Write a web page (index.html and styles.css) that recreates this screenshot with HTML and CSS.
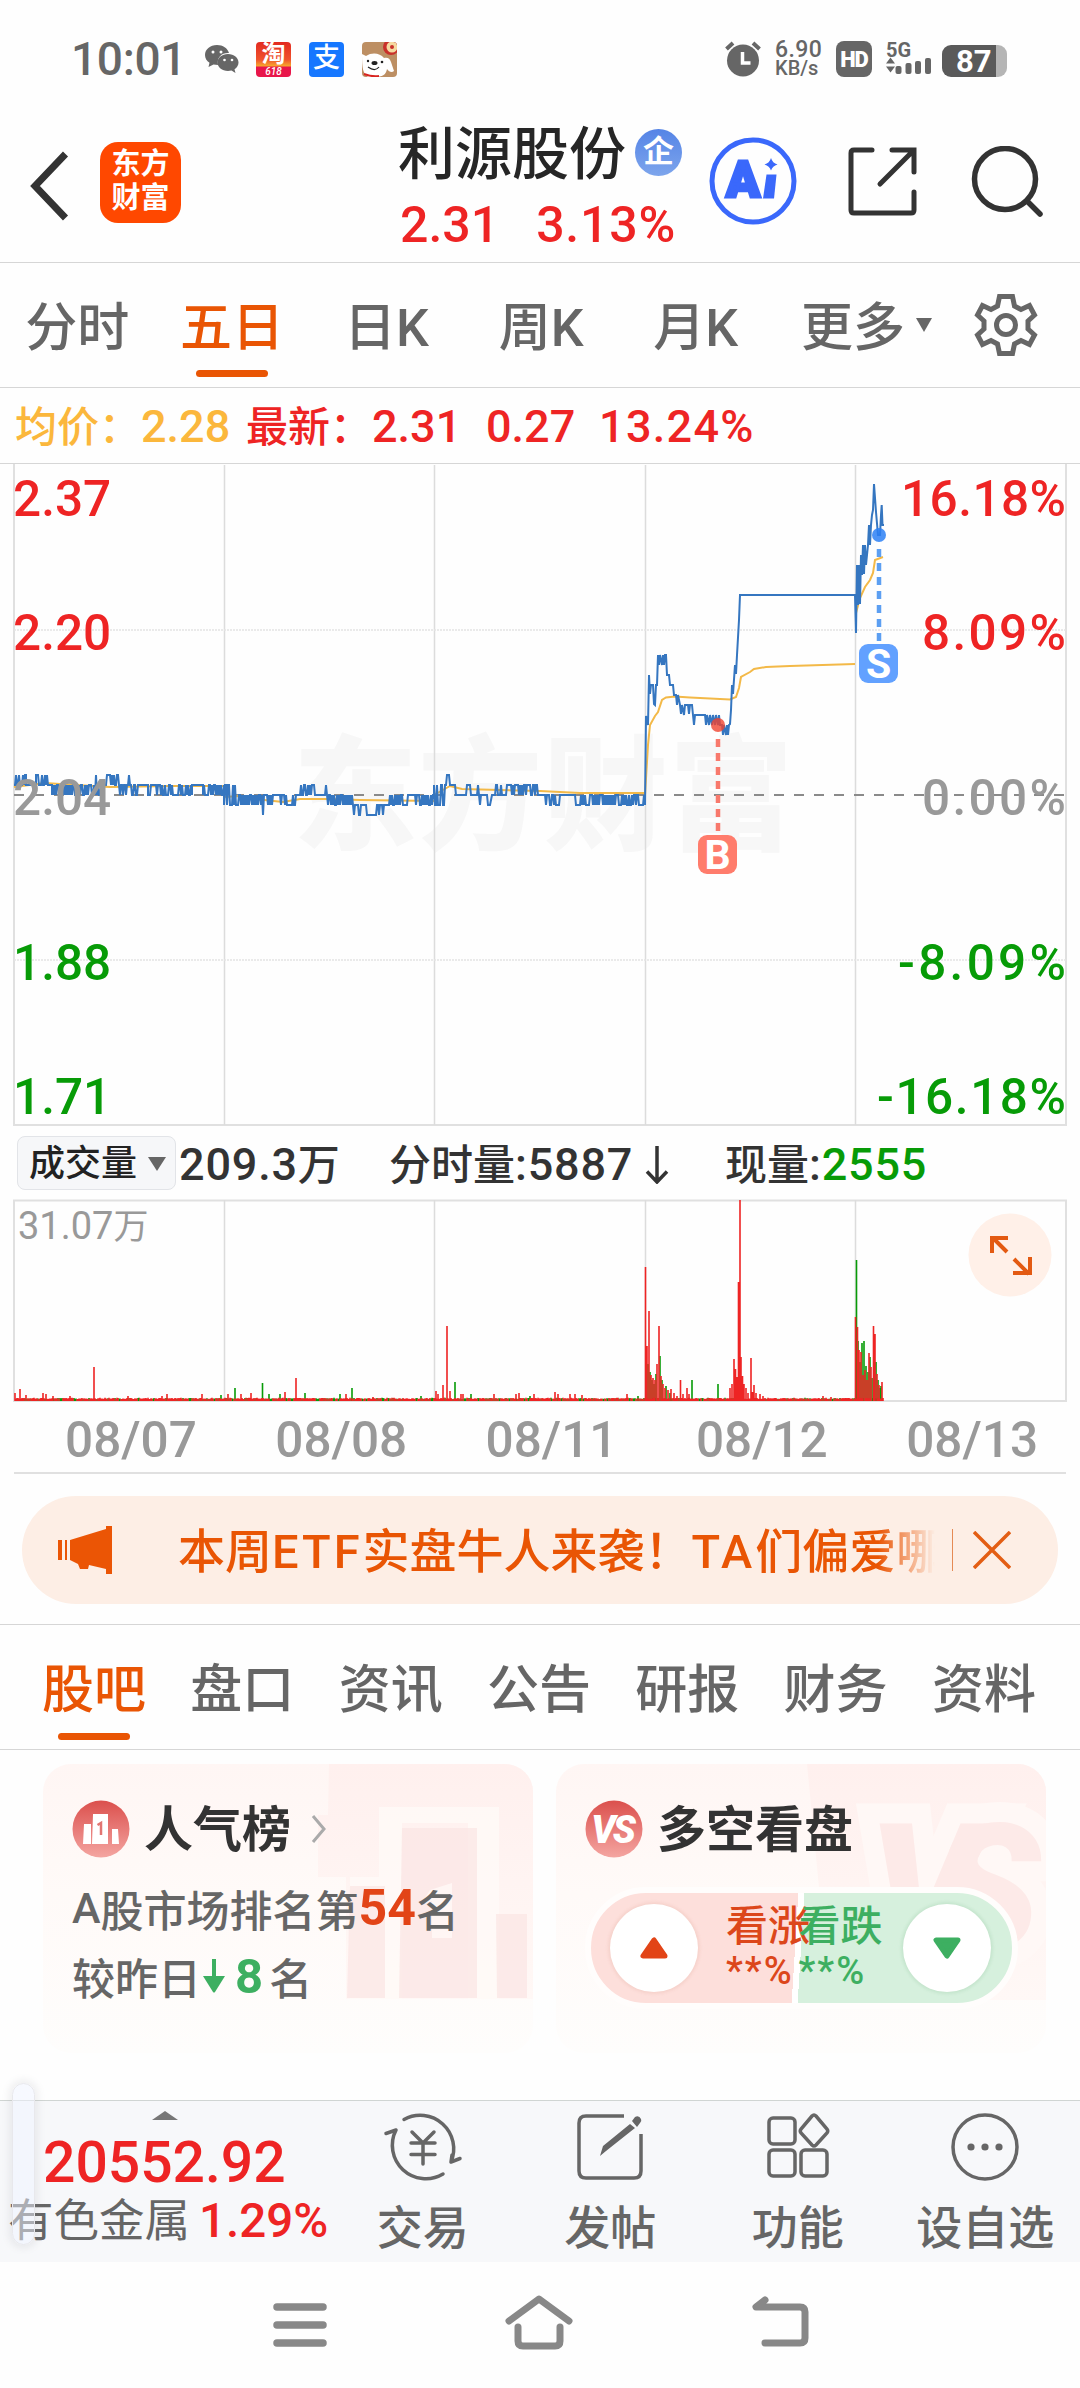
FILE: index.html
```html
<!DOCTYPE html>
<html lang="zh-CN">
<head>
    <meta charset="UTF-8">
    <meta name="viewport" content="width=device-width, initial-scale=1.0">
    <title>利源股份</title>
    <link rel="stylesheet" href="styles.css">
</head>
<body>
    <div class="status-bar">
        <span class="clock">10:01</span>
        <svg class="wechat" width="34" height="30" viewBox="0 0 34 30">
            <path d="M12 1C5 1 0 5.500 0 11c0 3.300 1.700 6 4.500 7.800L3.500 23l5-2.600 4.500.6C11.500 13 17 8.500 24 9 22.500 4 18 1 12 1z" fill="#666"/>
            <path d="M23 10c-6 0-10.500 3.800-10.500 8.500S17 27 23 27l3.500-.5 4 2.500-1-3.800c2.500-1.500 4-4 4-6.700C33.500 13.800 29 10 23 10z" fill="#666"/>
            <g fill="#fff"><circle cx="8" cy="8" r="1.500"/><circle cx="16" cy="8" r="1.500"/><circle cx="19.500" cy="16" r="1.300"/><circle cx="27" cy="16" r="1.300"/></g>
        </svg>
        <span class="app-icon taobao"><b>淘</b><i>618</i></span>
        <span class="app-icon alipay">支</span>
        <svg class="app-icon" width="35" height="35" viewBox="0 0 35 35">
            <rect width="35" height="35" fill="#bd8f63"/>
            <circle cx="29" cy="5" r="8" fill="#c9302a"/><circle cx="30" cy="5" r="5.500" fill="#f5d9a0"/><circle cx="30" cy="5" r="2" fill="#c9302a"/>
            <path d="M0 12l4 2c6-4 14-3 18 2 3-1 6 0 7 4l3 9c-2 2-5 1-7-2-1 6-5 8-12 8H6c-5-3-6-9-6-23z" fill="#fff"/>
            <ellipse cx="12.500" cy="21" rx="3" ry="2" fill="#222"/><circle cx="6" cy="19" r="1.200" fill="#222"/><circle cx="20" cy="20" r="1.300" fill="#222"/>
            <path d="M6 25q7 5 11 0" fill="none" stroke="#222" stroke-width="1.200"/><path d="M2 32q8 3 15 2" stroke="#d8231f" stroke-width="2" fill="none"/>
        </svg>
        <div class="status-right">
            <svg width="36" height="36" viewBox="0 0 36 36">
                <circle cx="18" cy="19.500" r="16" fill="#666"/>
                <path d="M1.500 8L8 2M28 2l6.500 6" stroke="#666" stroke-width="4"/>
                <path d="M17.500 11v11h8" fill="none" stroke="#fff" stroke-width="3.500"/>
            </svg>
            <div class="net-speed"><span>6.90</span><span>KB/s</span></div>
            <span class="hd">HD</span>
            <svg class="signal" width="46" height="36" viewBox="0 0 46 36">
                <text x="0" y="16" class="signal-text">5G</text>
                <path d="M0 22.500l4.500-6 4.500 6zM0 25.500l4.500 6 4.500-6z" fill="#666"/>
                <g fill="#666"><rect x="9.500" y="25" width="6" height="8" rx="2"/><rect x="19.500" y="22" width="6" height="11" rx="2"/><rect x="29" y="20" width="6" height="13" rx="2"/><rect x="39" y="17" width="6" height="16" rx="2"/></g>
            </svg>
            <div class="battery"><span>87</span></div>
        </div>
    </div>

    <div class="header">
        <svg class="back" width="40" height="70" viewBox="0 0 40 70"><path d="M35.500 3L5 35l30.500 32" fill="none" stroke="#333" stroke-width="7"/></svg>
        <div class="logo">东方<br>财富</div>
        <div class="stock">
            <div class="stock-name">利源股份<span class="qi">企</span></div>
            <div class="stock-price"><span>2.31</span><span class="pct">3.13%</span></div>
        </div>
        <svg class="ai" width="88" height="88" viewBox="0 0 88 88">
            <circle cx="44" cy="44" r="41" fill="none" stroke="#3a68fb" stroke-width="5"/>
            <text x="17" y="60" class="ai-text">A</text>
            <path d="M57.500 37.500h10l-2.500 24h-11z" fill="#3a68fb"/>
            <path d="M62 21q1.500 5 6.500 6.500-5 1.500-6.500 6-1.500-4.500-6.500-6 5-1.500 6.500-6.500z" fill="#3a68fb"/>
        </svg>
        <svg class="share" width="70" height="70" viewBox="0 0 70 70" fill="none" stroke="#333" stroke-width="5" stroke-linecap="round">
            <path d="M25 4H7q-3 0-3 3v57q0 3 3 3h57q3 0 3-3V46M45 4h22v22M66 5L33 38"/>
        </svg>
        <svg class="search" width="74" height="74" viewBox="0 0 74 74" fill="none" stroke="#333" stroke-width="5.500" stroke-linecap="round">
            <circle cx="35" cy="33" r="30.500"/><path d="M57 55l13 13"/>
        </svg>
    </div>

    <div class="period-tabs">
        <span>分时</span>
        <span class="active">五日</span>
        <span>日K</span>
        <span>周K</span>
        <span>月K</span>
        <span class="more">更多<i class="caret"></i></span>
        <svg class="gear" width="64" height="64" viewBox="-32 -32 64 64" fill="none" stroke="#666" stroke-width="5">
            <path d="M-6.500-28.500h13l2 9.500 6.500 3.500 8.500-4 5 9.500-6.500 6v8l6.500 6-5 9.500-8.500-4-6.500 3.500-2 9.500h-13l-2-9.500-6.500-3.500-8.500 4-5-9.500 6.500-6v-8l-6.500-6 5-9.500 8.500 4 6.500-3.500z"/>
            <circle r="9.500"/>
        </svg>
    </div>

    <div class="quote-line">
        <span class="avg">均价：<b>2.28</b></span>
        <span>最新：<b>2.31</b></span>
        <b>0.27</b>
        <b class="rise">13.24%</b>
    </div>

    <svg class="price-chart" width="1080" height="662" viewBox="0 464 1080 662">
        <text class="watermark" x="293" y="840" textLength="500">东方财富</text>
        <g class="grid">
            <path class="frame" d="M14 464V1125H1066V464"/>
            <path d="M224.500 465v660M434.500 465v660M645.500 465v660M855.500 465v660"/>
            <path class="dots" d="M14 630h1052M14 960h1052"/>
        </g>
        <path class="zero" d="M14 795h1052"/>
        <g class="axis">
            <text class="up" x="13" y="516">2.37</text>
            <text class="up" x="13" y="650">2.20</text>
            <text class="down" x="13" y="980">1.88</text>
            <text class="down" x="13" y="1114">1.71</text>
            <text class="up" x="901" y="516" textLength="165">16.18%</text>
            <text class="up" x="922" y="650" textLength="144">8.09%</text>
            <text class="down" x="898" y="980" textLength="168">-8.09%</text>
            <text class="down" x="877" y="1114" textLength="189">-16.18%</text>
        </g>
        <g class="avg-line">
            <path d="M14 787L45 783 60 784 110 787 170 786 224 786"/>
            <path d="M224 797L240 796 255 799 283 802 300 799 330 799 360 800 434 801"/>
            <path d="M434 795L450 786 462 789 500 790 540 791 580 793 645 793"/>
            <path d="M645 795L648 745 650 725 655 716 658 712 662 700 666 697.500 675 696.500 690 697.500 730 699.500 736 697 739 688 741 677 750 672 754 669 766 667 790 666 855 664"/>
            <path d="M856 613L860 598 865 587 870 580 873 573 875 560 883 557"/>
        </g>
        <path id="price-line" class="price-line"/>
        <g class="axis">
            <text class="flat" x="13" y="815">2.04</text>
            <text class="flat" x="922" y="815" textLength="144">0.00%</text>
        </g>
        <g class="mark buy">
            <circle cx="718" cy="725" r="7"/>
            <path d="M718 739v94"/>
            <rect x="698" y="835" width="39" height="39" rx="9"/>
            <text x="717.500" y="869">B</text>
        </g>
        <g class="mark sell">
            <circle cx="879" cy="535" r="7"/>
            <path d="M879 549v94"/>
            <rect x="859" y="644" width="39" height="39" rx="9"/>
            <text x="878.500" y="678">S</text>
        </g>
    </svg>

    <div class="volume-line">
        <span class="picker">成交量<i class="caret"></i></span>
        <span class="total"><b>209.3</b>万</span>
        <span class="minute">分时量<b>:5887</b></span>
        <svg class="arrow" width="24" height="38" viewBox="0 0 24 38" fill="none" stroke="#333" stroke-width="3.500"><path d="M12 0v36M2 25.500l10 10.500 10-10.500"/></svg>
        <span class="current">现量<b>:<em>2555</em></b></span>
    </div>

    <svg class="volume-chart" width="1080" height="204" viewBox="0 1199 1080 204">
        <g class="grid">
            <rect class="frame" x="14" y="1200.500" width="1052" height="200.500"/>
            <path d="M224.500 1200v200M434.500 1200v200M645.500 1200v200M855.500 1200v200"/>
        </g>
        <text class="scale" x="18" y="1239">31.07<tspan class="wan">万</tspan></text>
        <path id="vol-down" class="vol-down"/>
        <path id="vol-up" class="vol-up"/>
        <circle cx="1010" cy="1255" r="41.500" fill="#fff0e8"/>
        <path class="expand" d="M1007 1252l-14-14M992 1253v-15h16M1014 1259l15 15M1030 1257v16h-17"/>
    </svg>

    <div class="dates">
        <span>08/07</span><span>08/08</span><span>08/11</span><span>08/12</span><span>08/13</span>
    </div>

    <div class="banner">
        <svg width="54" height="48" viewBox="0 0 54 48" fill="#eb5505">
            <path d="M0 14h4v20H0zM7 14h2v20H7zM12 14L48 3V0h6v48h-6v-5l-17-4-1 4H22l-2-5-8-4z"/>
        </svg>
        <span class="banner-text">本周<b>ETF</b>实盘牛人来袭！<b>TA</b>们偏爱哪</span>
        <i class="divider"></i>
        <svg class="close" width="38" height="38" viewBox="0 0 38 38" stroke="#e35e14" stroke-width="3.500"><path d="M1 1l36 36M37 1L1 37"/></svg>
    </div>

    <div class="info-tabs">
        <span class="active">股吧</span>
        <span>盘口</span>
        <span>资讯</span>
        <span>公告</span>
        <span>研报</span>
        <span>财务</span>
        <span>资料</span>
    </div>

    <div class="cards">
        <div class="card">
            <svg class="card-bg" width="490" height="289" viewBox="43 1764 490 289">
                <path d="M329 1764h204v235H346v-122h-28v-62h10z" fill="url(#fade)"/>
                <path d="M379 1807h120v192h-31v-176h-66v176h-52v-122h29z" fill="#fffaf8" opacity=".8"/>
                <path d="M350 1886h35v112h-38zM402 1828h75v170h-78zM496 1914h31v84h-30z" fill="#fbe6e4" opacity=".75"/>
                <path d="M430 1890l22-7v55h-20v-37l-12 4z" fill="#fff6f4"/>
                <defs><linearGradient id="fade" x1="0" y1="0" x2="0" y2="1"><stop offset="0" stop-color="#fff0ee"/><stop offset="1" stop-color="#fff8f6"/></linearGradient></defs>
            </svg>
            <div class="card-title">
                <svg width="58" height="60" viewBox="0 0 58 60">
                    <defs><linearGradient id="ball" x1="0" y1="0" x2="0" y2="1"><stop offset="0" stop-color="#db504d"/><stop offset="1" stop-color="#f4a5a1"/></linearGradient></defs>
                    <circle cx="29" cy="30" r="28.500" fill="url(#ball)"/>
                    <path d="M12 25h7v20h-8zM21 15h15v30H20zM40 30h6l1 15h-7z" fill="#fff"/>
                    <path d="M25.500 26l3.500-2v12" fill="none" stroke="#e27572" stroke-width="2.500"/>
                </svg>
                <span>人气榜</span>
                <svg class="chev" width="16" height="30" viewBox="0 0 16 30" fill="none" stroke="#aaa" stroke-width="3"><path d="M2 2l11 13L2 28"/></svg>
            </div>
            <div class="rank"><span class="latin">A</span>股市场排名第<b class="hot">54</b>名</div>
            <div class="rank second">较昨日<svg width="24" height="34" viewBox="0 0 24 34" fill="#3daf61"><path d="M10 0h4v17h9L13 33q-1 1-2 0L1 17h9z"/></svg><b class="cool">8</b>名</div>
        </div>
        <div class="card">
            <svg class="card-bg" width="490" height="289" viewBox="556 1764 490 289">
                <path d="M807 1764h239v236H830z" fill="url(#fade)"/>
                <text class="vs-shadow" x="868" y="1950" textLength="172">VS</text>
                <text class="vs-big" x="868" y="1950" textLength="172">VS</text>
            </svg>
            <div class="card-title">
                <svg width="58" height="60" viewBox="0 0 58 60">
                    <circle cx="29" cy="30" r="28.500" fill="url(#ball)"/>
                    <text class="vs" x="27" y="44">VS</text>
                </svg>
                <span>多空看盘</span>
            </div>
            <div class="vote">
                <div class="vote-side bull">
                    <span class="knob"><svg width="28" height="22" viewBox="0 0 28 22"><path d="M14 3L3 19h22z" fill="#e24417" stroke="#e24417" stroke-width="5" stroke-linejoin="round"/></svg></span>
                    <div class="vote-text">看涨<span>**%</span></div>
                </div>
                <div class="vote-side bear">
                    <div class="vote-text">看跌<span>**%</span></div>
                    <span class="knob"><svg width="28" height="22" viewBox="0 0 28 22"><path d="M14 19L3 3h22z" fill="#3daf61" stroke="#3daf61" stroke-width="5" stroke-linejoin="round"/></svg></span>
                </div>
            </div>
        </div>
    </div>

    <div class="bottom-bar">
        <div class="index">
            <i class="caret"></i>
            <div class="index-value">20552.92</div>
            <div class="index-name">有色金属<b>1.29%</b></div>
        </div>
        <div class="action">
            <svg width="80" height="72" viewBox="-40 -36 80 72" fill="none" stroke="#666" stroke-width="3.500" stroke-linecap="round">
                <path d="M-19-27.500A33.500 33.500 0 0 1 28 15M20 27A33.500 33.500 0 0 1-27-17M28 15l9-3.500M28 15l1-7M-27-17l-10 3.500"/>
                <path d="M-11-15L0-4l11-11M0-4v21M-12-4h24M-12 7.500h24"/>
            </svg>
            <span>交易</span>
        </div>
        <div class="action">
            <svg width="80" height="72" viewBox="-40 -36 80 72" fill="none" stroke="#666" stroke-width="3.500">
                <path d="M14-31h-38q-7 0-7 7v48q0 7 7 7h48q7 0 7-7v-37"/>
                <path d="M-10 9l3-10L20-23l5 4L-4 4z" fill="#666" stroke="none"/><path d="M22-26l3-4q4-2 6 2 1 2-1 4l-3 4z" fill="#666" stroke="none"/>
            </svg>
            <span>发帖</span>
        </div>
        <div class="action">
            <svg width="80" height="72" viewBox="-40 -36 80 72" fill="none" stroke="#666" stroke-width="3.500">
                <rect x="-29" y="-29" width="26" height="26" rx="4"/><rect x="-29" y="3" width="26" height="26" rx="4"/><rect x="3" y="3" width="26" height="26" rx="4"/>
                <path d="M14-31q2-2 4 0l11 13q1.500 2 0 4L18-2q-2 2-4 0L3-14q-1.500-2 0-4z"/>
            </svg>
            <span>功能</span>
        </div>
        <div class="action">
            <svg width="80" height="72" viewBox="-40 -36 80 72">
                <circle r="32" fill="none" stroke="#666" stroke-width="3.500"/>
                <g fill="#666"><circle cx="-14" r="3.600"/><circle r="3.600"/><circle cx="14" r="3.600"/></g>
            </svg>
            <span>设自选</span>
        </div>
        <i class="side-handle"></i>
    </div>

    <div class="nav-bar">
        <svg width="60" height="60" viewBox="0 0 60 60" stroke="#888" stroke-width="7.500" stroke-linecap="round"><path d="M7 16h46M7 34h46M7 52h46"/></svg>
        <svg width="72" height="60" viewBox="0 0 72 60" fill="none" stroke="#888" stroke-width="7" stroke-linecap="round" stroke-linejoin="round"><path d="M6 30L36 8l30 22M15 36v14q0 5 5 5h32q5 0 5-5V36"/></svg>
        <svg width="64" height="60" viewBox="0 0 64 60" fill="none" stroke="#888" stroke-width="7" stroke-linecap="round" stroke-linejoin="round"><path d="M17 9l-9 7h44q5 0 5 5v26q0 5-5 5H17"/></svg>
    </div>

    <script src="chart.js"></script>
</body>
</html>
```
FILE: styles.css
```css
* {
    box-sizing: border-box;
}

body {
    margin: 0;
    width: 1080px;
    height: 2388px;
    overflow: hidden;
    background: #fefefe;
    color: #666;
    font-family: Roboto, "Noto Sans CJK SC", sans-serif;
    font-weight: 500;
}

svg {
    display: block;
    flex: none;
}

b, em, i {
    font-weight: 500;
    font-style: normal;
}

.caret {
    display: inline-block;
    border: 8px solid transparent;
    border-top: 14px solid #666;
    border-bottom: 0;
}

/* status bar */
.status-bar {
    display: flex;
    align-items: center;
    height: 104px;
    padding: 14px 73px 0 71px;
}

.clock {
    width: 134px;
    font-size: 46px;
    letter-spacing: -0.3px;
}

.wechat {
    margin-right: 17px;
}

.app-icon {
    width: 35px;
    height: 35px;
    margin-right: 18px;
    border-radius: 4px;
    overflow: hidden;
    color: #fff;
    text-align: center;
}

.taobao {
    background: linear-gradient(#e22a20 0, #f0522c 50%, #f7a52d 68%, #e8164a 72%);
}

.taobao b {
    display: block;
    font-size: 24px;
    font-weight: 700;
    line-height: 24px;
}

.taobao i {
    display: block;
    font-size: 10px;
    font-style: italic;
    line-height: 11px;
}

.alipay {
    background: #1677ff;
    font-size: 27px;
    line-height: 33px;
}

.status-right {
    display: flex;
    align-items: center;
    margin-left: auto;
}

.net-speed {
    display: flex;
    flex-direction: column;
    width: 61px;
    padding-left: 14px;
    font-size: 23px;
    line-height: 19px;
    letter-spacing: 0.4px;
}

.net-speed span + span {
    font-size: 20px;
    letter-spacing: 0;
}

.hd {
    width: 36px;
    height: 36px;
    margin: 0 14px;
    border-radius: 8px;
    background: #666;
    color: #fff;
    font-size: 22px;
    font-weight: 900;
    line-height: 37px;
    text-align: center;
    letter-spacing: -1px;
}

.signal-text {
    font-size: 20px;
    font-weight: 700;
    fill: #666;
}

.battery {
    width: 65px;
    height: 32px;
    margin: 4px 0 0 10px;
    border-radius: 9px;
    background: linear-gradient(90deg, #5a5a5a 54px, #b5b5b5 54px);
    color: #fff;
    font-size: 31px;
    font-weight: 700;
    line-height: 34px;
    padding-left: 14px;
}

.battery span {
    font-weight: 700;
}

/* header */
.header {
    display: flex;
    align-items: center;
    height: 159px;
    padding: 0 0 0 30px;
    border-bottom: 1px solid #d6d6d6;
}

.back {
    margin-top: 6px;
}

.logo {
    width: 81px;
    height: 81px;
    margin: 0 0 2px 30px;
    padding-top: 5px;
    border-radius: 18px;
    background: #ff4800;
    color: #fff;
    font-size: 29px;
    font-weight: 700;
    line-height: 34px;
    text-align: center;
}

.stock {
    width: 290px;
    margin: 8px 0 0 217px;
}

.stock-name {
    display: flex;
    align-items: center;
    color: #262626;
    font-size: 57px;
    font-weight: 500;
    line-height: 76px;
}

.qi {
    width: 47px;
    height: 47px;
    margin: -6px 0 0 9px;
    border-radius: 50%;
    background: linear-gradient(#5584e6, #7da5ec);
    color: #fff;
    font-size: 31px;
    font-weight: 700;
    line-height: 45px;
    text-align: center;
}

.stock-price {
    display: flex;
    gap: 37px;
    padding-left: 2px;
    color: #ee2424;
    font-size: 50px;
    line-height: 64px;
}

.stock-price .pct {
    letter-spacing: 0.8px;
}

.ai {
    margin: 0 0 4px 21px;
}

.ai-text {
    fill: #3a68fb;
    stroke: #3a68fb;
    stroke-width: 3;
    font-size: 50px;
    font-weight: 900;
}

.share {
    margin: 0 0 4px 50px;
}

.search {
    margin: 0 0 0 53px;
}

/* period tabs */
.period-tabs {
    display: grid;
    grid-template-columns: repeat(5, 154.6px) 190px 1fr;
    align-items: center;
    height: 125px;
    border-bottom: 1px solid #d6d6d6;
    font-size: 52px;
    line-height: 116px;
    text-align: center;
}

.period-tabs span {
    padding-top: 8px;
}

.period-tabs .active {
    position: relative;
    color: #e95504;
}

.period-tabs .more {
    padding-right: 3px;
}

.period-tabs .caret {
    margin: 0 0 14px 11px;
}

.gear {
    margin-left: 11px;
}

.active::after {
    content: "";
    position: absolute;
    left: 50%;
    width: 72px;
    height: 7px;
    margin-left: -36px;
    border-radius: 4px;
    bottom: 10px;
    background: #e95504;
}

/* average and last price */
.quote-line {
    display: flex;
    align-items: baseline;
    height: 76px;
    padding-left: 15px;
    border-bottom: 1px solid #d6d6d6;
    color: #ee2424;
    font-size: 42px;
    line-height: 78px;
}

.quote-line b {
    font-size: 45px;
}

.quote-line span {
    width: 231px;
    margin-right: 9px;
}

.quote-line > b {
    width: 113px;
}

.quote-line .rise {
    width: auto;
    letter-spacing: 1.3px;
}

.quote-line .avg {
    width: 231px;
    margin-right: 0;
    color: #fbb73c;
}

/* charts */
.grid path, .grid .frame {
    fill: none;
    stroke: #dcdcdc;
    stroke-width: 1.500;
}

.grid .frame {
    stroke: #e0e0e0;
    stroke-width: 2;
}

.grid .dots {
    stroke: #e3e3e3;
    stroke-dasharray: 2 1;
}

.watermark {
    fill: #f7f7f7;
    font-size: 124px;
    font-weight: 900;
}

.zero {
    stroke: #8a8a8a;
    stroke-width: 2;
    stroke-dasharray: 10 10;
}

.axis text {
    font-size: 49.5px;
}

.axis .up {
    fill: #ee2424;
}

.axis .down {
    fill: #079b07;
}

.axis .flat {
    fill: #999;
}

.avg-line {
    fill: none;
    stroke: #f3b948;
    stroke-width: 2;
}

.price-line {
    fill: none;
    stroke: #3576c0;
    stroke-width: 2;
}

.mark path {
    stroke-width: 4.500;
    stroke-dasharray: 8 6;
}

.mark text {
    fill: #fff;
    font-size: 41px;
    font-weight: 700;
    text-anchor: middle;
}

.buy {
    fill: #ff7c6c;
    stroke: none;
}

.buy circle {
    fill: #f0432f;
    opacity: 0.8;
}

.buy path {
    stroke: #f8796c;
}

.sell {
    fill: #62a1ff;
}

.sell circle {
    fill: #2b80f5;
    opacity: 0.85;
}

.sell path {
    stroke: #5c9ff2;
}

.volume-line {
    display: flex;
    align-items: center;
    height: 73px;
    padding: 0 0 0 17px;
    color: #333;
    font-size: 42px;
    line-height: 66px;
}

.volume-line span {
    padding-top: 5px;
}

.volume-line b {
    font-size: 45px;
    letter-spacing: 0.8px;
}

.volume-line .picker {
    width: 159px;
    height: 54px;
    padding: 0 0 0 11px;
    border: 1px solid #e2e4e8;
    border-radius: 8px;
    background: #f6f7f9;
    color: #222;
    font-size: 36px;
    line-height: 54px;
}

.picker .caret {
    margin: 0 0 5px 11px;
    border-width: 14px 9px 0;
}

.total {
    width: 213px;
    padding-left: 3px;
}

.minute {
    width: 256px;
}

.arrow {
    margin: 4px 56px 0 0;
}

.volume-line em {
    color: #079b07;
}

.scale {
    fill: #999;
    font-size: 38px;
    font-weight: 400;
}

.scale .wan {
    font-size: 35px;
}

.vol-up {
    stroke: #ee2424;
    stroke-width: 1.600;
}

.vol-down {
    stroke: #079b07;
    stroke-width: 1.600;
}

.expand {
    fill: none;
    stroke: #e35a12;
    stroke-width: 4;
}

.dates {
    display: grid;
    grid-template-columns: repeat(5, 210.3px);
    height: 71px;
    margin: 0 14px;
    padding-left: 51px;
    border-bottom: 2px solid #e0e0e0;
    color: #999;
    font-size: 49.5px;
    font-weight: 500;
    line-height: 74px;
}

/* banner */
.banner {
    display: flex;
    align-items: center;
    height: 108px;
    margin: 22px 22px 20px;
    padding-left: 36px;
    border-radius: 54px;
    background: #fdeee5;
    color: #e95504;
    font-size: 47px;
}

.banner-text {
    width: 757px;
    margin: 0 0 5px 66px;
    overflow: hidden;
    white-space: nowrap;
    -webkit-mask-image: linear-gradient(90deg, #000 700px, transparent 757px);
    mask-image: linear-gradient(90deg, #000 700px, transparent 757px);
}

.banner-text b {
    letter-spacing: 3px;
}

.divider {
    width: 1px;
    height: 42px;
    margin: 0 20px 0 17px;
    background: #e58a55;
}

/* info tabs */
.info-tabs {
    display: flex;
    gap: 44.3px;
    height: 126px;
    padding-left: 42px;
    border-top: 1px solid #d6d6d6;
    border-bottom: 1px solid #d6d6d6;
    font-size: 52px;
    line-height: 132px;
}

.info-tabs .active {
    position: relative;
    height: 125px;
    color: #e95504;
}

/* cards */
.cards {
    display: flex;
    gap: 23px;
    height: 350px;
    padding: 14px 0 0 43px;
}

.card {
    position: relative;
    width: 490px;
    height: 289px;
    padding: 35px 0 0 29px;
    border-radius: 28px;
    overflow: hidden;
    background: linear-gradient(#fff6f4, #fffaf8 45%, #fefdfc);
}

.card-bg {
    position: absolute;
    left: 0;
    top: 0;
}

.vs-shadow, .vs-big {
    font-size: 178px;
    font-weight: 900;
    font-style: italic;
    fill: #fdeae8;
}

.vs-shadow {
    fill: none;
    stroke: #fff8f6;
    stroke-width: 40;
}

.card-title {
    position: relative;
    display: flex;
    align-items: center;
    height: 60px;
    color: #333;
    font-size: 49px;
    font-weight: 700;
}

.card-title span {
    margin: -7px 0 0 14px;
}

.chev {
    margin: -1px 0 0 20px;
}

.vs {
    fill: #fff;
    font-size: 38px;
    font-weight: 900;
    font-style: italic;
    letter-spacing: -3px;
    text-anchor: middle;
}

.rank {
    position: relative;
    display: flex;
    align-items: center;
    height: 68px;
    margin-top: 15px;
    font-size: 43px;
    font-weight: 500;
}

.rank.second {
    margin-top: 0;
}

.rank svg {
    margin: 0 9px 0 1px;
}

.hot {
    color: #e24417;
    font-size: 50px;
    font-weight: 700;
}

.cool {
    margin-right: 6px;
    color: #3daf61;
    font-size: 49px;
    font-weight: 700;
}

.vote {
    position: relative;
    display: flex;
    width: 433px;
    height: 122px;
    margin: 28px 0 0;
    border: 6px solid #fffdfc;
    border-radius: 61px;
    overflow: hidden;
    background: linear-gradient(93.5deg, #fddfdb 207px, #fff 207px, #fff 213px, #d6f0dd 213px);
}

.vote-side {
    display: flex;
    align-items: center;
    width: 50%;
}

.knob {
    display: flex;
    align-items: center;
    justify-content: center;
    flex: none;
    width: 88px;
    height: 88px;
    margin: 0 19px;
    border-radius: 50%;
    background: #fff;
    box-shadow: 0 0 3px 2px rgba(200, 120, 100, 0.12);
}

.bear .knob {
    margin-left: 20px;
    box-shadow: 0 0 3px 2px rgba(80, 160, 100, 0.12);
}

.vote-text {
    margin-left: 9px;
    font-size: 42px;
    font-weight: 500;
    line-height: 46px;
    white-space: nowrap;
}

.vote-text span {
    display: block;
    font-size: 38px;
    line-height: 42px;
    letter-spacing: 2px;
}

.bull .vote-text {
    color: #dc471b;
}

.bear .vote-text {
    margin-left: -3px;
    color: #3daf61;
}

/* bottom toolbar */
.bottom-bar {
    position: relative;
    display: grid;
    grid-template-columns: 329px repeat(4, 187.5px);
    height: 162px;
    border-top: 1px solid #d0d5d3;
    background: #f7f8fa;
}

.index {
    padding-top: 10px;
    white-space: nowrap;
}

.index .caret {
    display: block;
    width: 0;
    margin-left: 152px;
    border: 13px solid transparent;
    border-top: 0;
    border-bottom: 9px solid #777;
}

.index-value {
    padding-left: 43px;
    margin-top: 10px;
    color: #ee2424;
    font-size: 57px;
    line-height: 66px;
}

.index-name {
    padding-left: 8px;
    font-size: 45.5px;
    font-weight: 400;
    line-height: 50px;
}

.index-name b {
    margin-left: 9px;
    color: #ee2424;
    font-size: 47.5px;
}

.action {
    display: flex;
    flex-direction: column;
    align-items: center;
    padding-top: 10px;
    font-size: 46px;
    font-weight: 500;
    line-height: 90px;
}

.side-handle {
    position: absolute;
    left: 12px;
    top: -18px;
    width: 23px;
    height: 162px;
    border-radius: 12px;
    border: 1px solid #e8e8ec;
    background: rgba(240, 244, 255, 0.5);
    box-shadow: 0 0 6px 4px rgba(130, 130, 140, 0.1);
}

/* system navigation */
.nav-bar {
    display: flex;
    justify-content: space-between;
    height: 126px;
    padding: 29px 268px 0 270px;
}
```
FILE: chart.js
```js
// small seeded generator so the ticks look the same on every load
let seed = 7;
function rand() {
    seed = (seed * 16807) % 2147483647;
    return seed / 2147483647;
}

// [from x, to x, high y, low y, chance of changing level]
const flatDays = [
    [14, 26, 775, 785, 0.7], [26, 36, 785, 785, 0], [36, 48, 775, 785, 0.6],
    [48, 52, 785, 785, 0], [52, 94, 785, 795, 0.7], [95, 97, 775, 795, 1],
    [98, 106, 785, 795, 0.5], [107, 119, 775, 785, 0.6], [120, 127, 785, 795, 0.7],
    [128, 129, 775, 785, 1], [130, 138, 785, 795, 0.6], [138, 148, 785, 785, 0],
    [148, 192, 785, 795, 0.6], [192, 203, 785, 785, 0], [203, 224, 785, 795, 0.8],
    [224, 235, 785, 805, 0.5], [236, 262, 795, 805, 0.8], [263, 264, 795, 815, 1],
    [265, 295, 795, 805, 0.6], [296, 314, 785, 795, 0.6], [315, 324, 795, 795, 0],
    [325, 326, 785, 795, 1], [328, 352, 795, 805, 0.8], [353, 384, 805, 815, 0.4],
    [386, 434, 795, 805, 0.5], [434, 445, 785, 805, 0.5], [446, 449, 775, 785, 0.5],
    [450, 455, 785, 785, 0], [456, 479, 785, 795, 0.3], [480, 490, 795, 805, 0.4],
    [492, 530, 785, 795, 0.4], [531, 545, 785, 795, 0.3], [546, 560, 795, 805, 0.7],
    [561, 573, 795, 795, 0], [574, 645, 795, 805, 0.65]
];

const lastDays = [
    [645, 805], [646, 716], [648, 725], [649, 675], [650, 694], [651, 685], [653, 685],
    [654, 704], [655, 705], [656, 685], [657, 685], [658, 655], [659, 665], [660, 655],
    [662, 665], [663, 655], [664, 665], [665, 655], [666, 655], [667, 675], [669, 675],
    [670, 685], [673, 685], [674, 695], [676, 695], [677, 705], [678, 695], [680, 705],
    [681, 714], [682, 705], [684, 715], [685, 705], [688, 705], [689, 714], [690, 705],
    [692, 705], [693, 715], [694, 725], [695, 715], [705, 715], [706, 725], [707, 715],
    [709, 725], [710, 715], [712, 725], [713, 715], [715, 725], [716, 715], [718, 725],
    [719, 715], [720, 725], [722, 725], [723, 735], [724, 725], [726, 735], [727, 725],
    [728, 735], [729, 725], [730, 724], [731, 710], [732, 685], [733, 694], [735, 665],
    [736, 674], [737, 655], [739, 620], [740, 595], [855, 595], [856, 633], [857, 565],
    [858, 605], [859, 565], [860, 604], [861, 555], [862, 575], [863, 545], [864, 574],
    [865, 545], [866, 565], [868, 545], [869, 525], [870, 545], [871, 525], [872, 515],
    [873, 510], [874, 484], [876, 512], [878, 535], [880, 535], [881, 515], [881.7, 505],
    [882.5, 525], [884, 525]
];

const points = [];
flatDays.forEach(([from, to, high, low, chance]) => {
    let y = high;
    for (let x = from; x <= to; x += 1) {
        if (rand() < chance) {
            y = y === high ? low : high;
        }
        points.push([x, y]);
    }
});
document.getElementById('price-line').setAttribute('d', 'M' + points.concat(lastDays).join('L'));

// volume spikes: [x, top y]
const upBars = [
    [15, 1393], [20, 1389], [26, 1395], [43, 1393], [46, 1394], [53, 1396], [70, 1396], [94, 1367],
    [128, 1396], [162, 1396], [167, 1394], [202, 1394], [228, 1394], [241, 1394], [251, 1393],
    [285, 1392], [296, 1378], [346, 1394], [373, 1397], [436, 1391], [438, 1394], [443, 1385],
    [447, 1326], [450, 1391], [461, 1394], [463, 1394], [494, 1394], [516, 1394], [519, 1393],
    [534, 1394], [555, 1392], [558, 1394], [570, 1394], [575, 1394], [582, 1395], [627, 1394],
    [645.5, 1267], [647, 1346], [649, 1311], [651, 1375], [653, 1378], [655, 1380], [657, 1364],
    [659, 1326], [661, 1376], [663, 1384], [665, 1388], [668, 1390], [671, 1389], [674, 1393],
    [677, 1396], [680.5, 1380], [683, 1394], [687, 1388], [689, 1394], [730, 1388], [732, 1384],
    [734, 1359], [735.5, 1369], [737, 1377], [738.5, 1282], [740, 1200], [741, 1357],
    [742.5, 1376], [744, 1384], [746, 1388], [748, 1393], [751, 1358], [752.5, 1392],
    [754, 1385], [756, 1393], [760, 1394], [763, 1396], [823, 1396], [831, 1397],
    [855.5, 1317], [857.5, 1327], [859, 1350], [861, 1352], [863, 1375], [865, 1370],
    [867, 1380], [869, 1353], [871, 1367], [873.5, 1326], [875, 1334], [877, 1374],
    [879, 1385], [882, 1382]
];
const downBars = [
    [221, 1395], [235, 1388], [262.5, 1383], [269, 1394], [280, 1394], [305, 1393], [340, 1394],
    [352, 1388], [421, 1396], [455, 1382], [471, 1394], [530, 1396], [638, 1396],
    [648, 1364], [650, 1372], [652, 1380], [654, 1384], [656, 1374], [660, 1356], [662, 1380],
    [666, 1386], [670, 1393], [692, 1380], [718, 1384], [735, 1392], [856.5, 1260],
    [858, 1341], [860, 1362], [862, 1343], [864, 1341], [866, 1366], [868, 1372],
    [870, 1357], [872, 1378], [876, 1362], [878, 1380], [880, 1388], [881, 1386]
];

for (let x = 15; x < 884; x += 1) {
    const bars = rand() < 0.75 ? upBars : downBars;
    bars.push([x, 1399 - rand() * 1.2]);
}

function drawBars(id, bars) {
    document.getElementById(id).setAttribute('d', bars.map(([x, y]) => `M${x} 1401V${y}`).join(''));
}

drawBars('vol-up', upBars);
drawBars('vol-down', downBars);
```
